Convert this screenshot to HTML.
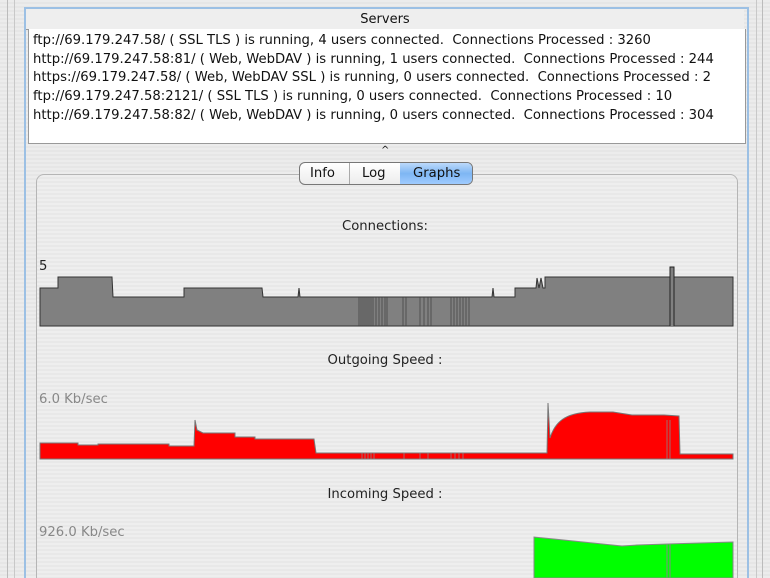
<!DOCTYPE html>
<html><head><meta charset="utf-8"><style>
html{overflow:hidden;height:578px}
body{margin:0;width:770px;height:578px;overflow:hidden;font-family:"DejaVu Sans","Liberation Sans",sans-serif;
background:repeating-linear-gradient(#ececec 0 2px,#e6e6e6 2px 4px);position:relative}
.a{position:absolute}
.t{position:absolute;font-size:13.2px;color:#111;white-space:nowrap}
</style></head><body>
<div class="a" style="left:7px;top:0;width:1px;height:578px;background:#bbb"></div>
<div class="a" style="left:14px;top:0;width:1px;height:578px;background:#c8c8c8"></div>
<div class="a" style="left:756px;top:0;width:1px;height:578px;background:#c8c8c8"></div>
<div class="a" style="left:762px;top:0;width:1px;height:578px;background:#bbb"></div>
<div class="a" style="left:24px;top:7px;width:721px;height:571px;border:2px solid #9cc0e4;border-bottom:none"></div>
<div class="a" style="left:26px;top:9px;width:718px;height:20px;background:#eee;border-bottom:1px solid #999"></div>
<div class="t" style="left:0;width:770px;text-align:center;top:12px;font-size:13px">Servers</div>
<div class="a" style="left:28px;top:29px;width:716px;height:114px;background:#fff;border:1px solid #999;border-top:none"></div>
<div class="t" style="left:33px;top:33px">ftp://69.179.247.58/ ( SSL TLS ) is running, 4 users connected.&nbsp; Connections Processed : 3260</div>
<div class="t" style="left:33px;top:52px">http://69.179.247.58:81/ ( Web, WebDAV ) is running, 1 users connected.&nbsp; Connections Processed : 244</div>
<div class="t" style="left:33px;top:70px">https://69.179.247.58/ ( Web, WebDAV SSL ) is running, 0 users connected.&nbsp; Connections Processed : 2</div>
<div class="t" style="left:33px;top:89px">ftp://69.179.247.58:2121/ ( SSL TLS ) is running, 0 users connected.&nbsp; Connections Processed : 10</div>
<div class="t" style="left:33px;top:108px">http://69.179.247.58:82/ ( Web, WebDAV ) is running, 0 users connected.&nbsp; Connections Processed : 304</div>
<div class="t" style="left:381px;top:145px;font-size:10px">^</div>
<div class="a" style="left:36px;top:174px;width:700px;height:420px;border:1px solid #b5b5b5;border-radius:8px;background:repeating-linear-gradient(#eeeeee 0 2px,#e8e8e8 2px 4px)"></div>
<div class="a" style="left:299px;top:162px;width:172px;height:21px;border:1px solid #777;border-radius:6px;background:linear-gradient(#fff,#ececec);overflow:hidden">
<div class="a" style="left:49px;top:0;width:1px;height:21px;background:#aaa"></div>
<div class="a" style="left:100px;top:0;width:72px;height:21px;background:linear-gradient(#bcd9fb,#7eb6f3 50%,#9fcbff)"></div>
<div class="t" style="left:10px;top:3px">Info</div>
<div class="t" style="left:62px;top:3px">Log</div>
<div class="t" style="left:113px;top:3px">Graphs</div>
</div>
<div class="t" style="left:0;width:770px;text-align:center;top:219px;color:#222">Connections:</div>
<div class="t" style="left:39px;top:259px;color:#222">5</div>
<div class="t" style="left:0;width:770px;text-align:center;top:353px;color:#222">Outgoing Speed :</div>
<div class="t" style="left:39px;top:392px;color:#888">6.0 Kb/sec</div>
<div class="t" style="left:0;width:770px;text-align:center;top:487px;color:#222">Incoming Speed :</div>
<div class="t" style="left:39px;top:525px;color:#888">926.0 Kb/sec</div>
<svg class="a" style="left:0;top:0" width="770" height="578">
<path d="M40,326 V288 H58 V277 H112 L113,297 H184 V288 H262 L263,297 H298 L299,288 L300,297 H492 L493,288 L494,297 H515 V288 H536 L537,278 L539,288 L541,278 L543,288 H545 V277 H733 V326 Z" fill="#808080" stroke="#333" stroke-width="1"/>
<path d="M670,326 V267 H674 V326" fill="#808080" stroke="#222"/>
<g stroke="#444" stroke-width="0.8">
<path d="M359,297V326M361,297V326M363,297V326M365,297V326M367,297V326M369,297V326M371,297V326M373,297V326M376,297V326M379,297V326M382,297V326M385,297V326M387,297V326M403,297V326M406,297V326M420,297V326M424,297V326M428,297V326M431,297V326M451,297V326M454,297V326M457,297V326M460,297V326M463,297V326M466,297V326M469,297V326"/>
</g>
<path d="M40,459 V443 H78 V445 H98 V444 H169 V446 H194 L195,420 L197,430 L203,433 H235 V437 H255 V439 H314 L316,453 H547 L548,403 L550,438 C555,422 565,413 590,412 H613 L632,415 H664 L679,416 L680,454 H733 V459 Z" fill="#f00" stroke="#777" stroke-width="1"/>
<path d="M362,459V453M365,459V453M368,459V453M371,459V453M374,459V453M404,459V453M420,459V453M428,459V453M451,459V453M455,459V453M459,459V453M463,459V453M667,459V420M670,459V420" stroke="#888" stroke-width="0.8"/>
<path d="M534,578 V537 L554,539 L583,542 L622,546 L637,545 L667,544 L733,542 V578 Z" fill="#0f0" stroke="#888"/>
<path d="M667,544V578M670,544V578" stroke="#888"/>
</svg>
</body></html>
